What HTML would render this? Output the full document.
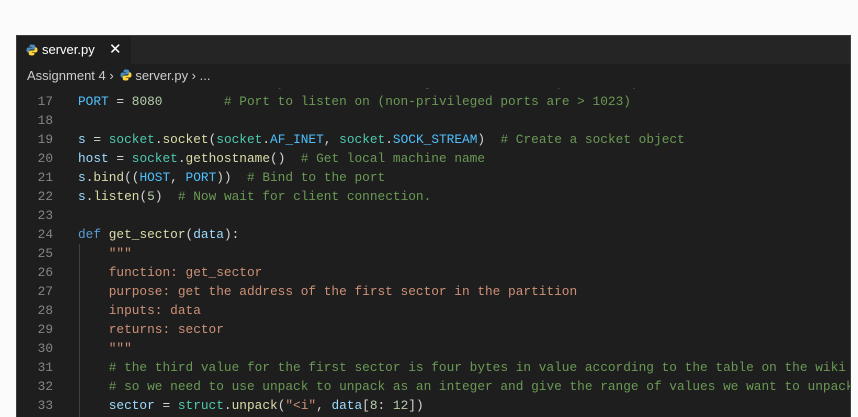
<!DOCTYPE html>
<html><head><meta charset="utf-8"><style>
html,body{margin:0;width:858px;height:417px;overflow:hidden}
body{background:#fbfbfc;position:relative;font-family:"Liberation Sans",sans-serif}
.ed{position:absolute;left:16px;top:35px;width:835px;height:382px;background:#1e1e1e;border:1px solid #3c3c3c;border-bottom:none;overflow:hidden;box-sizing:border-box}
.tabs{height:28px;background:#252526;position:relative}
.tab{position:absolute;left:0;top:0;width:114px;height:28px;background:#1e1e1e;color:#fff;font-size:13px;line-height:28px}
.tab .ic{position:absolute;left:9px;top:8px}
.tab .nm{position:absolute;left:25px}
.tab .x{position:absolute;left:92px;font-size:15px}
.bc{height:24px;line-height:24px;color:#cccccc;font-size:13px;padding-left:10px;position:relative;background:#1e1e1e}
.code{position:absolute;top:52px;left:0;right:0;bottom:0;font-family:"Liberation Mono",monospace;font-size:12.8px;overflow:hidden}
.ln{position:absolute;left:0;width:36px;text-align:right;color:#858585;height:19px;line-height:19px}
.tx{position:absolute;left:61px;white-space:pre;color:#d4d4d4;height:19px;line-height:19px}
.c{color:#6a9955}.v{color:#9cdcfe}.f{color:#dcdcaa}.k{color:#569cd6}.n{color:#b5cea8}.s{color:#ce9178}.t{color:#4ec9b0}.p{color:#4fc1ff}
.guide{position:absolute;left:62px;top:156px;width:1px;height:240px;background:#404040}
</style></head><body>
<div class="ed">
<div class="tabs"><div class="tab"><svg class="ic" width="12" height="12" viewBox="0 0 12 12"><path d="M6 0.5C3.5 0.5 3.6 1.6 3.6 1.6V3h2.5v.5H2.5S0.5 3.3 0.5 6s1.7 2.6 1.7 2.6h1V7.2s0-1.7 1.7-1.7h2.7s1.6 0 1.6-1.6V2S9.5 0.5 6 0.5z" fill="#4b8bbe"/><path d="M6 11.5c2.5 0 2.4-1.1 2.4-1.1V9H5.9v-.5h3.6s2 .2 2-2.5-1.7-2.6-1.7-2.6h-1v1.4s0 1.7-1.7 1.7H4.4s-1.6 0-1.6 1.6V10S2.5 11.5 6 11.5z" fill="#ffd43b"/></svg><span class="nm">server.py</span><span class="x">✕</span></div></div>
<div class="bc">Assignment 4 › <svg width="12" height="12" viewBox="0 0 12 12" style="vertical-align:-1px;margin:0 3px"><path d="M6 0.5C3.5 0.5 3.6 1.6 3.6 1.6V3h2.5v.5H2.5S0.5 3.3 0.5 6s1.7 2.6 1.7 2.6h1V7.2s0-1.7 1.7-1.7h2.7s1.6 0 1.6-1.6V2S9.5 0.5 6 0.5z" fill="#4b8bbe"/><path d="M6 11.5c2.5 0 2.4-1.1 2.4-1.1V9H5.9v-.5h3.6s2 .2 2-2.5-1.7-2.6-1.7-2.6h-1v1.4s0 1.7-1.7 1.7H4.4s-1.6 0-1.6 1.6V10S2.5 11.5 6 11.5z" fill="#ffd43b"/></svg>server.py › ...</div>
<div class="code">
<div class="guide"></div>
<div class="ln" style="top:-15px">16</div><div class="tx" style="top:-15px"><span class="v">HOST</span> = <span class="s">''</span>              <span class="c"># Symbolic name meaning all interfaces (localhost)</span></div>
<div class="ln" style="top:4px">17</div><div class="tx" style="top:4px"><span class="p">PORT</span> = <span class="n">8080</span>        <span class="c"># Port to listen on (non-privileged ports are &gt; 1023)</span></div>
<div class="ln" style="top:23px">18</div>
<div class="ln" style="top:42px">19</div><div class="tx" style="top:42px"><span class="v">s</span> = <span class="t">socket</span>.<span class="f">socket</span>(<span class="t">socket</span>.<span class="p">AF_INET</span>, <span class="t">socket</span>.<span class="p">SOCK_STREAM</span>)  <span class="c"># Create a socket object</span></div>
<div class="ln" style="top:61px">20</div><div class="tx" style="top:61px"><span class="v">host</span> = <span class="t">socket</span>.<span class="f">gethostname</span>()  <span class="c"># Get local machine name</span></div>
<div class="ln" style="top:80px">21</div><div class="tx" style="top:80px"><span class="v">s</span>.<span class="f">bind</span>((<span class="p">HOST</span>, <span class="p">PORT</span>))  <span class="c"># Bind to the port</span></div>
<div class="ln" style="top:99px">22</div><div class="tx" style="top:99px"><span class="v">s</span>.<span class="f">listen</span>(<span class="n">5</span>)  <span class="c"># Now wait for client connection.</span></div>
<div class="ln" style="top:118px">23</div>
<div class="ln" style="top:137px">24</div><div class="tx" style="top:137px"><span class="k">def</span> <span class="f">get_sector</span>(<span class="v">data</span>):</div>
<div class="ln" style="top:156px">25</div><div class="tx s" style="top:156px">    """</div>
<div class="ln" style="top:175px">26</div><div class="tx s" style="top:175px">    function: get_sector</div>
<div class="ln" style="top:194px">27</div><div class="tx s" style="top:194px">    purpose: get the address of the first sector in the partition</div>
<div class="ln" style="top:213px">28</div><div class="tx s" style="top:213px">    inputs: data</div>
<div class="ln" style="top:232px">29</div><div class="tx s" style="top:232px">    returns: sector</div>
<div class="ln" style="top:251px">30</div><div class="tx s" style="top:251px">    """</div>
<div class="ln" style="top:270px">31</div><div class="tx c" style="top:270px">    # the third value for the first sector is four bytes in value according to the table on the wiki</div>
<div class="ln" style="top:289px">32</div><div class="tx c" style="top:289px">    # so we need to use unpack to unpack as an integer and give the range of values we want to unpack</div>
<div class="ln" style="top:308px">33</div><div class="tx" style="top:308px">    <span class="v">sector</span> = <span class="t">struct</span>.<span class="f">unpack</span>(<span class="s">"&lt;i"</span>, <span class="v">data</span>[<span class="n">8</span>: <span class="n">12</span>])</div>
</div>
</div>
</body></html>
